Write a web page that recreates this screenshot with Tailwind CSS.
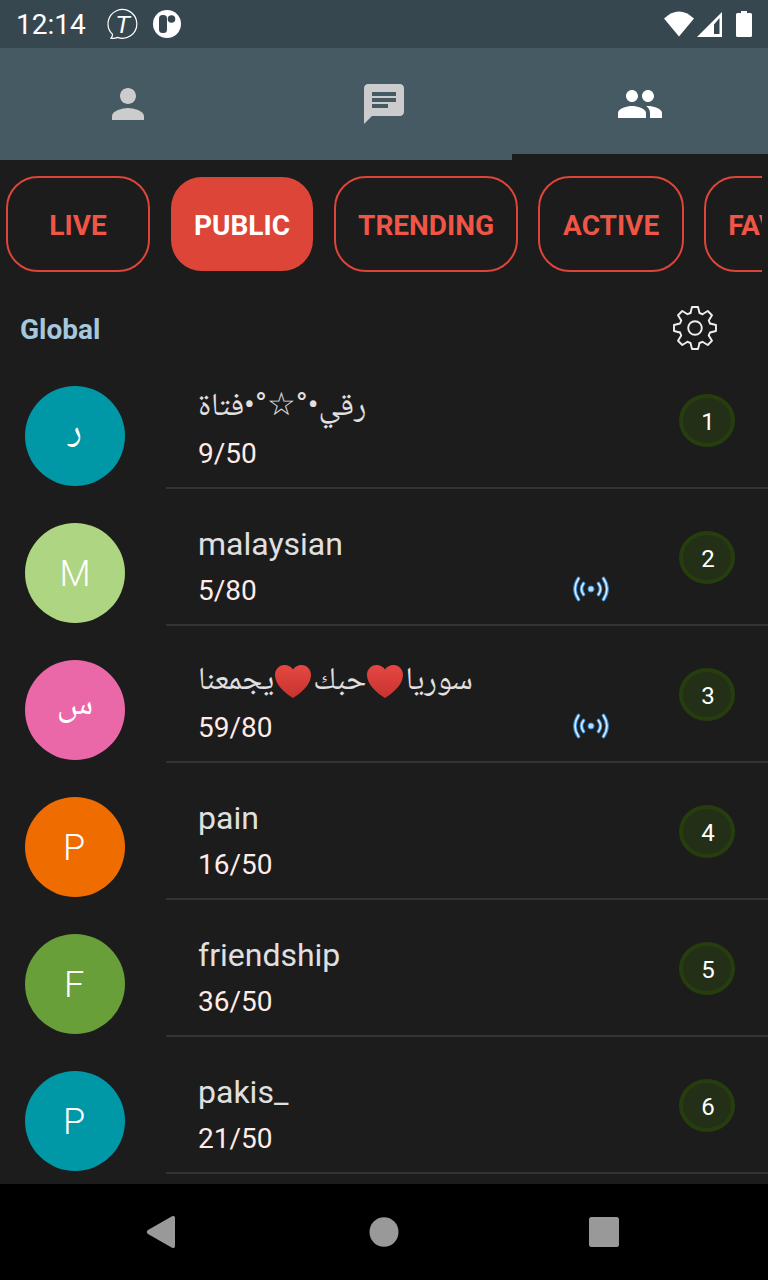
<!DOCTYPE html>
<html lang="en">
<head>
<meta charset="utf-8">
<meta name="viewport" content="width=device-width, initial-scale=1">
<title>Public groups</title>
<script src="https://cdn.jsdelivr.net/npm/@tailwindcss/browser@4"></script>
</head>
<body class="flex min-h-screen flex-col bg-[#1c1c1c] font-[Roboto,'Noto_Naskh_Arabic','Noto_Sans_Arabic',sans-serif] text-white">

<!-- Status bar -->
<header class="flex h-12 items-center bg-[#37474f] px-4">
  <time class="pt-0.5 text-[28px] leading-9">12:14</time>
  <svg class="ml-[21px] size-8" viewBox="0 0 32 32" fill="none" stroke="#fff" aria-hidden="true">
    <path d="M5.500 26.300A14.400 14.400 0 1 1 10.500 29.400Q7.500 30.800 4 30.200Q5.600 28.500 5.500 26.300Z" stroke-width="1.200"/>
    <text x="15.500" y="24.500" text-anchor="middle" fill="#fff" stroke="none" class="font-['Liberation_Sans'] text-[24px] italic">T</text>
  </svg>
  <svg class="ml-3 size-8" viewBox="0 0 32 32" aria-hidden="true">
    <circle cx="16" cy="16" r="14" fill="#fff"/>
    <rect x="8" y="7" width="8" height="18" rx="3.500" fill="#37474f"/>
    <circle cx="20.500" cy="11" r="3.800" fill="#37474f"/>
  </svg>
  <svg class="ml-auto h-8 w-[90px]" viewBox="0 0 90 32" fill="#fff" aria-hidden="true">
    <path d="M2 10.500Q17 -3.500 32 10.500L17 28.500Z"/>
    <path fill-rule="evenodd" d="M60 4V29H35ZM57.500 10L52 16.500V26H57.500Z"/>
    <path d="M79 3H85V5H88.500Q90 5 90 6.500V27.500Q90 29 88.500 29H75.500Q74 29 74 27.500V6.500Q74 5 75.500 5H79Z"/>
  </svg>
</header>

<!-- Tabs -->
<nav class="grid h-28 grid-cols-3 bg-[#465a64]" aria-label="Sections">
  <button class="flex items-center justify-center border-b-6 border-transparent pt-1.5" aria-label="Profile">
    <svg class="size-12" viewBox="0 0 24 24" fill="#ccc"><path d="M12 12c2.210 0 4-1.790 4-4s-1.790-4-4-4-4 1.790-4 4 1.790 4 4 4zm0 2c-2.670 0-8 1.340-8 4v2h16v-2c0-2.660-5.330-4-8-4z"/></svg>
  </button>
  <button class="flex items-center justify-center border-b-6 border-transparent pt-1.5" aria-label="Chats">
    <svg class="size-12" viewBox="0 0 24 24" fill="#ccc"><path d="M20 2H4c-1.100 0-1.990.9-1.990 2L2 22l4-4h14c1.100 0 2-.9 2-2V4c0-1.100-.9-2-2-2zM6 9h12v2H6V9zm8 5H6v-2h8v2zm4-6H6V6h12v2z"/></svg>
  </button>
  <button class="flex items-center justify-center border-b-6 border-[#1c1c1c] pt-1.5" aria-label="Groups" aria-current="page">
    <svg class="size-12" viewBox="0 0 24 24" fill="#fff"><path d="M16 11c1.660 0 2.990-1.340 2.990-3S17.660 5 16 5c-1.660 0-3 1.340-3 3s1.340 3 3 3zm-8 0c1.660 0 2.990-1.340 2.990-3S9.660 5 8 5C6.340 5 5 6.340 5 8s1.340 3 3 3zm0 2c-2.330 0-7 1.170-7 3.500V19h14v-2.500c0-2.330-4.670-3.500-7-3.500zm8 0c-.29 0-.62.02-.97.05 1.160.84 1.970 1.970 1.970 3.450V19h6v-2.500c0-2.330-4.670-3.500-7-3.500z"/></svg>
  </button>
</nav>

<main class="grow">
  <!-- Filters -->
  <div class="mx-1.5 mt-4 flex gap-5 overflow-hidden text-[28px] font-bold leading-9 text-[#f05545]">
    <button class="h-24 min-w-36 shrink-0 rounded-[32px] border-2 border-[#dd4539] px-[22px] pt-1">LIVE</button>
    <button class="h-24 min-w-36 shrink-0 rounded-[32px] border border-transparent bg-[#dd4539] bg-clip-padding px-[23px] pt-1 text-white" aria-pressed="true">PUBLIC</button>
    <button class="h-24 min-w-36 shrink-0 rounded-[32px] border-2 border-[#dd4539] px-[22px] pt-1">TRENDING</button>
    <button class="h-24 min-w-36 shrink-0 rounded-[32px] border-2 border-[#dd4539] px-[23px] pt-1">ACTIVE</button>
    <button class="h-24 min-w-36 shrink-0 rounded-[32px] border-2 border-[#dd4539] px-[22px] pt-1">FAVORITE</button>
  </div>

  <div class="flex h-20 items-center justify-between pl-5 pr-[49px] pt-8">
    <h1 class="pt-1 text-[28px] font-bold leading-9 text-[#a5c8dc]">Global</h1>
    <button aria-label="Settings">
      <svg class="size-12" viewBox="-24 -24 48 48" fill="none" stroke="#eee" stroke-width="1.900" stroke-linejoin="round" stroke-linecap="round">
        <defs><path id="tooth" d="M-4.500 -15L-3 -21H3L4.500 -15L7.420 -13.790"/></defs>
        <use href="#tooth"/><use href="#tooth" transform="rotate(45)"/><use href="#tooth" transform="rotate(90)"/><use href="#tooth" transform="rotate(135)"/><use href="#tooth" transform="rotate(180)"/><use href="#tooth" transform="rotate(225)"/><use href="#tooth" transform="rotate(270)"/><use href="#tooth" transform="rotate(315)"/>
        <circle r="6.800"/>
      </svg>
    </button>
  </div>

  <!-- Shared symbols -->
  <svg class="absolute size-0" aria-hidden="true">
    <defs>
      <linearGradient id="red" x1="0" y1="0" x2="0" y2="1"><stop offset="0" stop-color="#e54842"/><stop offset="1" stop-color="#c8322f"/></linearGradient>
    </defs>
    <symbol id="live" viewBox="0 0 36 26" fill="none" stroke-linecap="round">
      <g stroke="#3f8fd6" stroke-width="3.600"><path d="M5.500 2.500Q-1.500 13 5.500 23.500M30.500 2.500Q37.500 13 30.500 23.500M10.500 7.500Q6.500 13 10.500 18.500M25.500 7.500Q29.500 13 25.500 18.500"/></g>
      <g stroke="#d8edff" stroke-width="1.600"><path d="M5.500 2.500Q-1.500 13 5.500 23.500M30.500 2.500Q37.500 13 30.500 23.500M10.500 7.500Q6.500 13 10.500 18.500M25.500 7.500Q29.500 13 25.500 18.500"/></g>
      <circle cx="18" cy="13" r="3" fill="#b4dcff" stroke="#3f8fd6" stroke-width="1"/>
    </symbol>
    <symbol id="heart" viewBox="0 0 36 33">
      <path fill="url(#red)" d="M18 4.500C20 1.500 23 0 26.500 0C32 0 36 4.500 36 10C36 19.500 26 28 18 33C10 28 0 19.500 0 10C0 4.500 4 0 9.500 0C13 0 16 1.500 18 4.500Z"/>
    </symbol>
  </svg>

  <ul>
    <li class="flex">
      <div class="w-[166px] shrink-0 pl-[25px] pt-[34px]"><div class="flex size-[100px] items-center justify-center rounded-full bg-[#0097a7] pb-4 text-[36px] leading-10">ر</div></div>
      <div class="flex min-w-0 grow border-b-2 border-[#333] pb-[15px] pl-8 pr-[33px]">
        <div class="grow pt-8"><h2 class="text-[32px] leading-10 text-[#e0e0e0]"><bdi dir="rtl">رقي•°☆°•فتاة</bdi></h2><p class="mt-3 text-[28px] leading-9 text-[#ffebe7]">9/50</p></div>
        <span class="mt-[42px] flex h-[53px] w-14 items-center justify-center rounded-[50%] border-4 border-[#263e0d] bg-[#232f16] pl-0.5 pt-0.5 text-2xl">1</span>
      </div>
    </li>
    <li class="flex">
      <div class="w-[166px] shrink-0 pl-[25px] pt-[34px]"><div class="flex size-[100px] items-center justify-center rounded-full bg-[#aed581] pt-0.5 text-[36px] font-light leading-10">M</div></div>
      <div class="flex min-w-0 grow border-b-2 border-[#333] pb-[15px] pl-8 pr-[33px]">
        <div class="grow pt-[35px]"><h2 class="text-[32px] leading-10 text-[#e0e0e0]">malaysian</h2><p class="mt-[9px] text-[28px] leading-9 text-[#ffebe7]">5/80</p></div>
        <svg class="mr-[70px] mt-[87px] h-[26px] w-9" role="img" aria-label="Live"><use href="#live"/></svg>
        <span class="mt-[42px] flex h-[53px] w-14 items-center justify-center rounded-[50%] border-4 border-[#263e0d] bg-[#232f16] pl-0.5 pt-0.5 text-2xl">2</span>
      </div>
    </li>
    <li class="flex">
      <div class="w-[166px] shrink-0 pl-[25px] pt-[34px]"><div class="flex size-[100px] items-center justify-center rounded-full bg-[#ea68a8] pb-4 text-[36px] leading-10">س</div></div>
      <div class="flex min-w-0 grow border-b-2 border-[#333] pb-[15px] pl-8 pr-[33px]">
        <div class="grow pt-8"><h2 class="h-10 text-[32px] leading-10 text-[#e0e0e0]"><bdi dir="rtl">سوريا<svg class="ml-px mr-0.5 inline h-[33px] w-9 align-[-9px]" role="img" aria-label="heart"><use href="#heart"/></svg>حبك<svg class="ml-px mr-0.5 inline h-[33px] w-9 align-[-9px]" role="img" aria-label="heart"><use href="#heart"/></svg>يجمعنا</bdi></h2><p class="mt-3 text-[28px] leading-9 text-[#ffebe7]">59/80</p></div>
        <svg class="mr-[70px] mt-[87px] h-[26px] w-9" role="img" aria-label="Live"><use href="#live"/></svg>
        <span class="mt-[42px] flex h-[53px] w-14 items-center justify-center rounded-[50%] border-4 border-[#263e0d] bg-[#232f16] pl-0.5 pt-0.5 text-2xl">3</span>
      </div>
    </li>
    <li class="flex">
      <div class="w-[166px] shrink-0 pl-[25px] pt-[34px]"><div class="flex size-[100px] items-center justify-center rounded-full bg-[#ef6c00] pr-0.5 pt-0.5 text-[36px] font-light leading-10">P</div></div>
      <div class="flex min-w-0 grow border-b-2 border-[#333] pb-[15px] pl-8 pr-[33px]">
        <div class="grow pt-[35px]"><h2 class="text-[32px] leading-10 text-[#e0e0e0]">pain</h2><p class="mt-[9px] text-[28px] leading-9 text-[#ffebe7]">16/50</p></div>
        <span class="mt-[42px] flex h-[53px] w-14 items-center justify-center rounded-[50%] border-4 border-[#263e0d] bg-[#232f16] pl-0.5 pt-0.5 text-2xl">4</span>
      </div>
    </li>
    <li class="flex">
      <div class="w-[166px] shrink-0 pl-[25px] pt-[34px]"><div class="flex size-[100px] items-center justify-center rounded-full bg-[#689f38] pr-0.5 pt-0.5 text-[36px] font-light leading-10">F</div></div>
      <div class="flex min-w-0 grow border-b-2 border-[#333] pb-[15px] pl-8 pr-[33px]">
        <div class="grow pt-[35px]"><h2 class="text-[32px] leading-10 text-[#e0e0e0]">friendship</h2><p class="mt-[9px] text-[28px] leading-9 text-[#ffebe7]">36/50</p></div>
        <span class="mt-[42px] flex h-[53px] w-14 items-center justify-center rounded-[50%] border-4 border-[#263e0d] bg-[#232f16] pl-0.5 pt-0.5 text-2xl">5</span>
      </div>
    </li>
    <li class="flex">
      <div class="w-[166px] shrink-0 pl-[25px] pt-[34px]"><div class="flex size-[100px] items-center justify-center rounded-full bg-[#0097a7] pr-0.5 pt-0.5 text-[36px] font-light leading-10">P</div></div>
      <div class="flex min-w-0 grow border-b-2 border-[#333] pb-[15px] pl-8 pr-[33px]">
        <div class="grow pt-[35px]"><h2 class="text-[32px] leading-10 text-[#e0e0e0]">pakis_</h2><p class="mt-[9px] text-[28px] leading-9 text-[#ffebe7]">21/50</p></div>
        <span class="mt-[42px] flex h-[53px] w-14 items-center justify-center rounded-[50%] border-4 border-[#263e0d] bg-[#232f16] pl-0.5 pt-0.5 text-2xl">6</span>
      </div>
    </li>
  </ul>
</main>

<!-- System navigation -->
<footer class="flex h-24 items-center justify-between bg-black px-[140px]">
  <button aria-label="Back"><svg class="size-10" viewBox="0 0 40 40" fill="#999"><path d="M8 18L32 4.300Q35 3 35 6V34Q35 37 32 35.700L8 22Q5.500 20 8 18Z"/></svg></button>
  <button aria-label="Home"><svg class="size-10" viewBox="0 0 40 40" fill="#999"><ellipse cx="20" cy="20" rx="14.500" ry="14.800"/></svg></button>
  <button aria-label="Overview"><svg class="size-10" viewBox="0 0 40 40" fill="#999"><rect x="1" y="5" width="30" height="30" rx="2.500"/></svg></button>
</footer>
</body>
</html>
